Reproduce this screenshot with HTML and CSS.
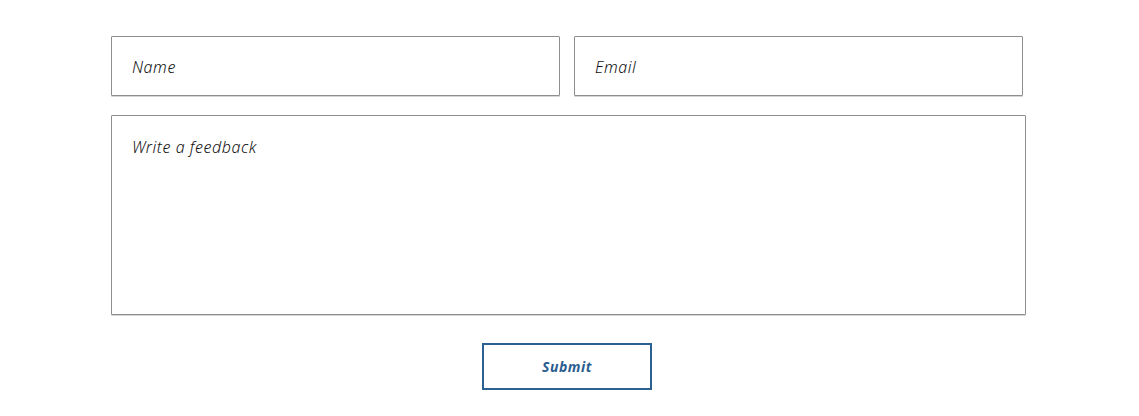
FILE: index.html
```html
<!DOCTYPE html>
<html>
<head>
<meta charset="utf-8">
<link rel="stylesheet" href="styles.css">
</head>
<body>
<form class="feedback">
  <div class="row">
    <input class="field" type="text" placeholder="Name">
    <input class="field" type="email" placeholder="Email">
  </div>
  <textarea class="field area" placeholder="Write a feedback"></textarea>
  <div class="actions">
    <button class="submit" type="button">Submit</button>
  </div>
</form>
</body>
</html>
```

FILE: styles.css
```css
html, body {
  margin: 0;
  padding: 0;
  background: #ffffff;
}
body {
  font-family: "Noto Sans", sans-serif;
}
.feedback {
  width: 915px;
  margin: 36px 0 0 111px;
  display: flex;
  flex-direction: column;
}
.row {
  display: flex;
  gap: 14px;
  width: 912px;
}
.field {
  box-sizing: border-box;
  border: 1px solid #8e8e8e;
  border-radius: 1px;
  box-shadow: 0 1px 0 #d6d6d6;
  font-family: "Noto Sans", sans-serif;
  font-style: italic;
  font-weight: 300;
  font-size: 16px;
  letter-spacing: 0.55px;
  color: #111;
  padding: 2px 20px 0;
  outline: none;
  background: #fff;
}
.row .field {
  flex: 1;
  height: 60px;
}
.field::placeholder {
  color: #111;
  opacity: 1;
}
.area {
  margin-top: 19px;
  height: 200px;
  padding: 20px 20px;
  resize: none;
  line-height: 22px;
}
.actions {
  display: flex;
  justify-content: center;
  margin-top: 28px;
}
.submit {
  width: 170px;
  height: 47px;
  border: 2px solid #2a6192;
  background: #fff;
  color: #2a5d8f;
  font-family: "Noto Sans", sans-serif;
  font-style: italic;
  font-weight: 700;
  font-size: 14px;
  letter-spacing: 0.5px;
  margin-right: 3px;
  cursor: pointer;
}
```
